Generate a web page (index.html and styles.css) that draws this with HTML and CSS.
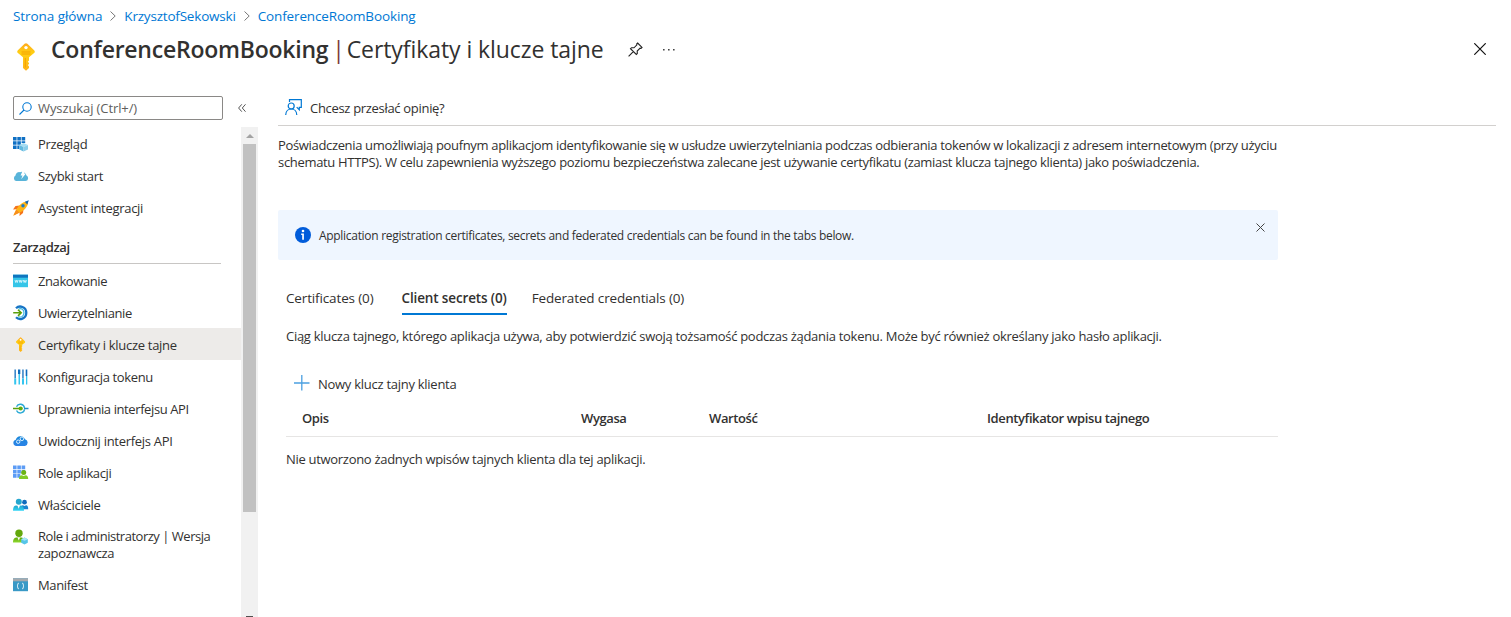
FILE: index.html
```html
<!DOCTYPE html>
<html lang="pl">
<head>
<meta charset="utf-8">
<title>ConferenceRoomBooking | Certyfikaty i klucze tajne</title>
<link rel="stylesheet" href="styles.css">
</head>
<body>
<svg class="defs" width="0" height="0" aria-hidden="true">
  <defs>
    <linearGradient id="gold" x1="0" y1="0" x2="0" y2="1"><stop offset="0" stop-color="#ffa81c"/><stop offset=".35" stop-color="#ffcf12"/><stop offset="1" stop-color="#ffb31a"/></linearGradient>
    <linearGradient id="green" x1="0" y1="0" x2="0" y2="1"><stop offset="0" stop-color="#5fa50b"/><stop offset="1" stop-color="#8fdb30"/></linearGradient>
    <linearGradient id="cyan" x1="0" y1="0" x2="0" y2="1"><stop offset="0" stop-color="#22a5cb"/><stop offset="1" stop-color="#32d4f5"/></linearGradient>
    <linearGradient id="blue" x1="0" y1="0" x2="0" y2="1"><stop offset="0" stop-color="#1988d9"/><stop offset="1" stop-color="#2b83e8"/></linearGradient>
    <symbol id="key" viewBox="0 0 18 28"><path d="M7.6.8Q9 -.5 10.4.8l6.7 6.5q1.4 1.4 0 2.8L12 14.2v3.2l-1.2 1.3 1.2 1.2v1l-1.2 1.2 1.2 1.3V25l-3 2.8L6 25V14.200L.9 10.100q-1.400-1.400 0-2.800z" fill="url(#gold)"/><circle cx="9" cy="4.600" r="1.700" fill="#fff"/><path d="M4.500 9h9M4.500 11h9" stroke="#f5a000" stroke-width="1"/><path d="M8.300 15v9.500" stroke="#f5a000" stroke-width="1"/></symbol>
  </defs>
</svg>
<header class="header">
  <nav class="crumbs">
    <a class="t-c1">Strona główna</a>
    <svg width="6" height="10" viewBox="0 0 6 10"><path d="M.5.5 5.200 5 .5 9.500" fill="none" stroke="#777"/></svg>
    <a class="t-c2">KrzysztofSekowski</a>
    <svg width="6" height="10" viewBox="0 0 6 10"><path d="M.5.5 5.200 5 .5 9.500" fill="none" stroke="#777"/></svg>
    <a class="t-c3">ConferenceRoomBooking</a>
  </nav>
  <div class="titlebar">
    <svg class="title-key" width="18" height="28"><use href="#key"/></svg>
    <h1 class="title"><span class="title-app">ConferenceRoomBooking</span><span class="title-bar">|</span><span class="title-page">Certyfikaty i klucze tajne</span></h1>
    <svg class="pin" width="15" height="15" viewBox="0 0 15 15" fill="none" stroke="#222" stroke-width="1.100"><path d="M9.600 1 14 5.400l-1 .9-.9-.2-2.900 2.900.1 2.500-1 1L2.500 6.700l1-1 2.500.1L8.900 2.900 8.700 1.900zM5.300 9.700.6 14.400"/></svg>
    <svg class="dots" width="12" height="3" viewBox="0 0 12 3" fill="#444"><rect y="1" width="1.600" height="1.500"/><rect x="5" y="1" width="1.600" height="1.500"/><rect x="10" y="1" width="1.600" height="1.500"/></svg>
    <svg class="close" width="12" height="12" viewBox="0 0 12 12"><path d="M.3.300l11.400 11.400M11.700.3.300 11.700" stroke="#111" stroke-width="1.200"/></svg>
  </div>
</header>
<div class="body">
  <aside class="side">
    <div class="searchrow">
      <div class="search"><svg width="13" height="13" viewBox="0 0 13 13" fill="none" stroke="#0078d4" stroke-width="1.100"><circle cx="8" cy="5" r="4.200"/><path d="M5 8 .5 12.500"/></svg><span class="t-search">Wyszukaj (Ctrl+/)</span></div>
      <svg class="collapse" width="8" height="8" viewBox="0 0 8 8" fill="none" stroke="#555"><path d="M3.800.300.600 4l3.200 3.700M7.500.300 4.300 4l3.200 3.700"/></svg>
    </div>
    <div class="menuwrap">
      <nav class="menu">
        <a class="item"><svg class="ico" viewBox="0 0 16 16"><path fill="#0f70c4" d="M0 1h3.600v3.600H0zM4.300 1h3.600v3.600H4.300zM8.600 1h3.600v3.600H8.600zM0 5.200h3.600v3.600H0zM4.300 5.200h3.600v3.600H4.300zM8.600 5.200h3.600V7H8.600zM0 9.400h3.600V13H0zM4.300 9.400h2V13h-2z"/><path fill="#a5dcf2" d="M10.500 7 15 9l-4.400 2L6.300 9z"/><path fill="#61b9df" d="M6.300 9l4.200 2v4.500l-4.200-2z"/><path fill="#89cdea" d="M15 9l-4.500 2v4.500l4.500-2z"/></svg><span>Przegląd</span></a>
        <a class="item"><svg class="ico" viewBox="0 0 16 16"><path fill="#59b4d9" d="M3 13A3 3 0 0 1 2.500 7.500 3.700 3.700 0 0 1 7 4.200 4.800 4.800 0 0 1 13.500 7.500 2.900 2.900 0 0 1 12.500 13z"/><path fill="#fff" d="M9.700 2.500h2.500L11 5.500h2L8.200 11.300l1.300-3.900H7.600z"/></svg><span>Szybki start</span></a>
        <a class="item"><svg class="ico" viewBox="0 0 16 16"><path fill="#f5731b" d="M7 5.500 2.500 6 0 9.500l4-.2zM10.500 9 10 13l-3.500 3 .2-4.500z"/><path fill="#ffb416" d="M13.500 1.500 15 3c-.5 4-3.500 7-8 9.500L.3 15.500 3.500 9C6 5 9.500 2 13.500 1.500z"/><path fill="#f78d1e" d="M3.200 9.700 6.500 12.500.3 15.800z"/><path fill="#1465b5" d="M11.800 1.700 15.800.2l-1.500 4.200z"/><circle cx="10" cy="5.800" r="1.700" fill="#197cca"/></svg><span class="looser">Asystent integracji</span></a>
        <h2 class="group">Zarządzaj</h2>
        <a class="item"><svg class="ico" viewBox="0 0 16 16"><path fill="#35c5e8" d="M0 1.700h15v12.500H0z"/><path fill="#0f75bf" d="M0 1.700h15v3H0z"/><path fill="none" stroke="#e9fbff" stroke-width=".8" d="m2 7 .7 2.500L3.500 7.300l.8 2.200L5 7M6.200 7l.7 2.500.8-2.200.8 2.200.7-2.500M10.400 7l.7 2.500.8-2.200.8 2.200.7-2.500"/></svg><span class="tighter">Znakowanie</span></a>
        <a class="item"><svg class="ico" viewBox="0 0 16 16" fill="none"><path stroke="#1674c5" stroke-width="2.300" d="M3 3.300C6.500-.2 13.300 1.800 13.300 7.800S6.500 15.800 3 12.300"/><path stroke="#3cb9e3" stroke-width="1.200" d="M5.500 4.200c3-1.700 5.500.6 5.500 3.600s-2.700 5.300-5.500 3.600"/><path stroke="#5a9f0b" stroke-width="1.600" d="M.2 7.800h7.500M5 4.700 8.200 7.800 5 10.900"/></svg><span class="tighter">Uwierzytelnianie</span></a>
        <a class="item selected"><svg class="ico" viewBox="0 0 16 16"><use href="#key" x="2.800" y="0" width="9.600" height="15.500"/></svg><span class="looser">Certyfikaty i klucze tajne</span></a>
        <a class="item"><svg class="ico" viewBox="0 0 16 16"><path fill="#0f6cbd" d="M1.500.5h1.300v9H1.500zM5 .5h2.300v4.500H5zM9.300.5h1.300v9H9.300zM12.700.5h1.600v6.500h-1.600z"/><path fill="#35c5ef" d="M1.200 9.500h2v6h-2zM5.500 5H7v10.500H5.500zM9 9.500h2v6H9zM13 7h1.300v8.500H13z"/></svg><span>Konfiguracja tokenu</span></a>
        <a class="item"><svg class="ico" viewBox="0 0 16 16" fill="none"><path stroke="#29a9d5" stroke-width="1.400" d="M3.500 5.700a4.200 4.200 0 0 1 8 1.300M3.500 9.500a4.200 4.200 0 0 0 8-1.300"/><path stroke="#5a9f0b" stroke-width="1.500" d="M0 7.500h7"/><path stroke="#1f8fc5" stroke-width="1.500" d="M11 7.500h4.500"/><circle cx="7.700" cy="7.500" r="2.100" fill="#62ad0d"/></svg><span class="tighter">Uprawnienia interfejsu API</span></a>
        <a class="item"><svg class="ico" viewBox="0 0 16 16"><path fill="url(#blue)" d="M3.300 13A3.200 3.200 0 0 1 2.800 6.700a4.900 4.900 0 0 1 9.200-.5A3.500 3.500 0 0 1 12 13z"/><g fill="none" stroke="#d8efff"><circle cx="5.200" cy="8.700" r="1.700"/><circle cx="8.900" cy="5.800" r="1.800"/><path d="M6.500 7.500 7.800 6.700"/></g></svg><span class="looser">Uwidocznij interfejs API</span></a>
        <a class="item"><svg class="ico" viewBox="0 0 16 16"><path fill="#5c9cf5" d="M0 .5h3.600v3.600H0zM4.300.5h3.600v3.600H4.300zM8.600.5h3.600v3.600H8.600zM0 4.800h3.600v3.600H0zM4.300 4.800h3.600v3.600H4.300zM8.600 4.800h3.600v3.600H8.600zM0 9.100h3.600v3.600H0zM4.300 9.100h3v3.600h-3z"/><circle cx="10.700" cy="7.500" r="2.500" fill="#6bb313"/><path fill="#81cb26" d="M6 14c0-4 2.500-4.600 4.700-3 2.200-1.600 4.500-1 4.500 3z"/></svg><span>Role aplikacji</span></a>
        <a class="item"><svg class="ico" viewBox="0 0 16 16"><circle cx="11.500" cy="5.200" r="2.400" fill="#0f6cbd"/><path fill="#1984d0" d="M8 12.300C8 8 9.500 7.800 11.500 9c2-1.200 3.700-1 3.700 3.300z"/><circle cx="5.800" cy="4.700" r="3" fill="#25a6cf"/><path fill="url(#cyan)" d="M0 13.700C0 8.500 2.700 7.600 5.500 9.300c2.800-1.700 5.500-.8 5.500 4.400z"/><path d="m4.500 8.800 1.200 3 1.200-3z" fill="#fff"/></svg><span class="looser">Właściciele</span></a>
        <a class="item two"><svg class="ico" viewBox="0 0 16 16"><path fill="url(#green)" d="M0 13.500C0 9 2.200 8 5.800 8.600c3.600-.6 6 .4 6 4.900z"/><circle cx="6" cy="4.300" r="3.700" fill="#63a80c"/><path d="m4.500 8.400 1.300 3 1.300-3z" fill="#fff"/><path fill="#56c5e8" d="m11.500 8.500 3.300 1.700v3.600l-3.300 1.700-3.300-1.700v-3.600z"/><path fill="#a6e6f7" d="m11.500 8.500 3.300 1.700-3.300 1.600-3.300-1.600z"/></svg><span><span class="tightest">Role i administratorzy | Wersja</span><br>zapoznawcza</span></a>
        <a class="item"><svg class="ico" viewBox="0 0 16 16"><path fill="#3999c6" d="M0 1.300h15v12.900H0z"/><path fill="#a5aaae" d="M0 1.300h15v3H0z"/><path fill="none" stroke="#fff" stroke-width=".9" d="M5.800 6.200q-1.300 0-1.100 1.600 0 1-.7 1.200.7.200.7 1.200-.2 1.600 1.100 1.600M9.200 6.200q1.300 0 1.100 1.600 0 1 .7 1.200-.7.200-.7 1.200.2 1.600-1.100 1.600"/></svg><span>Manifest</span></a>
      </nav>
      <div class="scroll"><span class="arrow"></span><span class="thumb"></span><span class="arrow-down"></span></div>
    </div>
  </aside>
  <main class="main">
    <div class="toolbar"><svg width="17" height="17" viewBox="0 0 17 17" fill="none" stroke="#0078d4" stroke-width="1.200"><path d="M4.500 3V.6h11.800v7.800h-2v2.400l-2.600-2.600"/><circle cx="6.200" cy="7" r="3"/><path d="M.7 16c.3-8 10.800-8 11.100 0"/></svg><span class="t-fb">Chcesz przesłać opinię?</span></div>
    <p class="intro"><span class="t-i1">Poświadczenia umożliwiają poufnym aplikacjom identyfikowanie się w usłudze uwierzytelniania podczas odbierania tokenów w lokalizacji z adresem internetowym (przy użyciu</span><br><span class="t-i2">schematu HTTPS). W celu zapewnienia wyższego poziomu bezpieczeństwa zalecane jest używanie certyfikatu (zamiast klucza tajnego klienta) jako poświadczenia.</span></p>
    <div class="banner">
      <svg width="16" height="16" viewBox="0 0 16 16"><circle cx="8" cy="8" r="8" fill="#015cda"/><circle cx="8" cy="4" r="1.300" fill="#fff"/><path d="M6.200 6.500h2.700v6.300H7.200V8h-1z" fill="#fff"/></svg>
      <span class="t-ban">Application registration certificates, secrets and federated credentials can be found in the tabs below.</span>
      <svg class="ban-x" width="9" height="9" viewBox="0 0 9 9"><path d="m.5.500 8 8m0-8-8 8" stroke="#444"/></svg>
    </div>
    <section class="content">
      <div class="tabs"><a class="tab tab1"><span>Certificates (0)</span></a><a class="tab tab2"><span>Client secrets (0)</span></a><a class="tab tab3"><span>Federated credentials (0)</span></a></div>
      <p class="desc">Ciąg klucza tajnego, którego aplikacja używa, aby potwierdzić swoją tożsamość podczas żądania tokenu. Może być również określany jako hasło aplikacji.</p>
      <div class="add"><svg width="16" height="16" viewBox="0 0 16 16"><path d="M0 8h15.500M7.800 0v15.500" stroke="#4ba0e1" stroke-width="1.300"/></svg><span class="t-add">Nowy klucz tajny klienta</span></div>
      <div class="thead"><span>Opis</span><span>Wygasa</span><span>Wartość</span><span>Identyfikator wpisu tajnego</span></div>
      <p class="empty">Nie utworzono żadnych wpisów tajnych klienta dla tej aplikacji.</p>
    </section>
  </main>
</div>
</body>
</html>
```
FILE: styles.css
```css
* { box-sizing: border-box; }
body { margin: 0; height: 617px; overflow: hidden; background: #fff; color: #323130; font: 13px/17px "Open Sans", "Noto Sans", sans-serif; letter-spacing: -0.35px; }
svg { flex: none; display: block; }
.defs { position: absolute; }
span, a { white-space: nowrap; }
p, h1, h2 { margin: 0; font-weight: 400; }
.header { height: 96px; }
.crumbs { display: flex; align-items: center; height: 32px; padding-left: 13px; gap: 8px; color: #0078d4; font-size: 13.5px; }
.t-c1 { letter-spacing: -0.07px; }
.t-c2 { letter-spacing: -0.2px; }
.t-c3 { letter-spacing: -0.13px; }
.titlebar { display: flex; align-items: center; height: 34px; padding-left: 17px; }
.title-key { margin-top: 16px; }
.title { display: flex; align-items: center; margin: -1px 0 0 16px; font-size: 23px; line-height: 34px; }
.title-app { font-weight: 600; letter-spacing: -0.23px; }
.title-bar { margin: 0 2px 0 4px; color: #7d3b38; }
.title-page { letter-spacing: -0.07px; }
.pin { margin-left: 24px; }
.dots { margin-left: 20px; }
.close { margin-left: auto; margin-right: 25px; }
.body { display: flex; height: 521px; }
.side { width: 258px; flex: none; display: flex; flex-direction: column; }
.searchrow { display: flex; align-items: center; height: 24px; padding-left: 13px; }
.search { display: flex; align-items: center; gap: 6px; width: 210px; height: 24px; padding-left: 5px; border: 1px solid #8a8886; border-radius: 2px; color: #605e5c; letter-spacing: -0.1px; }
.collapse { margin-left: 15px; }
.menuwrap { display: flex; flex: 1; margin-top: 7px; min-height: 0; }
.menu { width: 241px; padding-top: 1px; }
.item { display: flex; align-items: center; height: 32px; padding-left: 13px; gap: 9px; }
.item.two { height: 48px; }
.item.two .ico { margin-top: -16px; }
.ico { width: 16px; height: 16px; }
.looser { letter-spacing: -0.29px; }
.tighter { letter-spacing: -0.4px; }
.tightest { letter-spacing: -0.48px; }
.selected { margin: -1px 0 1px; padding-top: 2px; background: #edebe9; }
.group { width: 208px; height: 39px; margin: 1px 0 1px 13px; padding-top: 14px; border-bottom: 1px solid #c8c6c4; font-size: 13px; font-weight: 600; }
.scroll { display: flex; flex-direction: column; align-items: center; width: 17px; padding-top: 7px; background: #f1f1f1; }
.arrow { border: 4px solid transparent; border-top: 0; border-bottom: 4px solid #a3a3a3; }
.thumb { width: 13px; height: 368px; margin-top: 6px; background: #c1c1c1; }
.arrow-down { width: 7px; height: 1px; margin-top: auto; background: #505050; }
.main { width: 1218px; margin-left: 20px; }
.toolbar { display: flex; align-items: center; gap: 8px; height: 30px; padding: 0 0 6px 7px; border-bottom: 1px solid #d2d0ce; }
.t-fb { margin-top: 2px; letter-spacing: -0.31px; }
.intro { margin-top: 11px; }
.t-i1 { letter-spacing: -0.34px; }
.t-i2 { letter-spacing: -0.32px; }
.banner { display: flex; align-items: center; gap: 8px; width: 1000px; height: 50px; margin-top: 39px; padding: 0 13px 0 17px; border-radius: 2px; background: #eff6ff; font-size: 12px; }
.t-ban { margin-top: 1px; letter-spacing: -0.3px; }
.ban-x { margin: -16px 0 0 auto; }
.content { width: 1000px; padding-left: 8px; }
.tabs { display: flex; margin-top: 24px; font-size: 13.5px; letter-spacing: -0.14px; }
.tab { height: 31px; padding-top: 6px; }
.tab2 { margin-left: 28px; border-bottom: 2px solid #0078d4; font-weight: 600; }
.tab3 { margin-left: 25px; }
.desc { margin-top: 13px; letter-spacing: -0.29px; }
.add { display: flex; align-items: center; gap: 8px; height: 32px; margin-top: 23px; padding-left: 8px; }
.add svg { margin-top: -2px; }
.t-add { letter-spacing: -0.27px; }
.thead { display: grid; grid-template-columns: 279px 128px 278px 1fr; height: 37px; padding: 10px 0 0 16px; border-bottom: 1px solid #e6e5e4; font-weight: 600; letter-spacing: -0.39px; }
.empty { margin-top: 14px; letter-spacing: -0.3px; }
```
